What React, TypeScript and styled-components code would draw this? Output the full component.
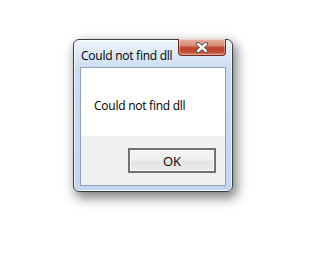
import React from "react";
import styled, { createGlobalStyle } from "styled-components";

const Global = createGlobalStyle`
  html, body { margin: 0; padding: 0; background: #ffffff; }
  body { font-family: "Open Sans", "Noto Sans", sans-serif; }
`;

const Page = styled.div`
  width: 333px;
  height: 280px;
  padding: 39px 0 0 73px;
  box-sizing: border-box;
`;

const Window = styled.div`
  width: 160px;
  height: 153px;
  box-sizing: border-box;
  border: 1px solid #3c3f44;
  border-radius: 6px;
  background: linear-gradient(to bottom, #eef4fb 0px, #dce8f6 14px, #cadcf1 30px, #c2d7ef 100%);
  box-shadow: inset 0 0 0 1px rgba(255, 255, 255, 0.75), 3px 5px 12px 1px rgba(0, 0, 0, 0.5);
  display: flex;
  flex-direction: column;
`;

const TitleBar = styled.div`
  height: 27px;
  display: flex;
  justify-content: space-between;
  align-items: flex-start;
  padding: 0 6px 0 7px;
`;

const Title = styled.span`
  font-size: 12px;
  line-height: 12px;
  letter-spacing: -0.25px;
  color: #000000;
  padding-top: 10px;
  white-space: nowrap;
`;

const CloseButton = styled.div`
  width: 48px;
  height: 17px;
  margin-top: -1px;
  box-sizing: border-box;
  border: 1px solid #6b2a1e;
  border-top: none;
  border-radius: 0 0 4px 4px;
  background: linear-gradient(to bottom, #eab2a4 0%, #d98b78 40%, #c2432c 55%, #c34a32 80%, #d98065 100%);
  box-shadow: inset 0 0 0 1px rgba(255, 255, 255, 0.35);
  display: flex;
  align-items: center;
  justify-content: center;
`;

const Client = styled.div`
  flex: 1;
  margin: 0 6px 5px 6px;
  border: 1px solid #8ea2b9;
  display: flex;
  flex-direction: column;
`;

const Body = styled.div`
  background: #ffffff;
  height: 68px;
  padding: 25px 0 0 13px;
  box-sizing: border-box;
`;

const Message = styled.span`
  font-size: 12px;
  line-height: 16px;
  letter-spacing: -0.25px;
  color: #000000;
  white-space: nowrap;
`;

const Footer = styled.div`
  flex: 1;
  background: #f0f0f0;
  display: flex;
  justify-content: flex-end;
  align-items: flex-start;
  padding: 12px 9px 0 0;
`;

const Button = styled.button`
  width: 88px;
  height: 25px;
  box-sizing: border-box;
  border: 2px solid #707070;
  background: linear-gradient(to bottom, #f4f4f4 0%, #eeeeee 50%, #e3e3e3 51%, #e9e9e9 100%);
  box-shadow: inset 0 0 0 1px #fcfcfc;
  font-family: "Open Sans", "Noto Sans", sans-serif;
  font-size: 13px;
  color: #000000;
  padding: 0;
  display: flex;
  align-items: center;
  justify-content: center;
`;

export default function App() {
  return (
    <>
      <Global />
      <Page>
        <Window>
          <TitleBar>
            <Title>Could not find dll</Title>
            <CloseButton>
              <svg width="14" height="11" viewBox="0 0 14 11">
                <path d="M3 2 L11 9 M11 2 L3 9" stroke="#4a4a4a" strokeWidth="4.2" strokeLinecap="round" />
                <path d="M3 2 L11 9 M11 2 L3 9" stroke="#ffffff" strokeWidth="2.4" strokeLinecap="round" />
              </svg>
            </CloseButton>
          </TitleBar>
          <Client>
            <Body>
              <Message>Could not find dll</Message>
            </Body>
            <Footer>
              <Button>OK</Button>
            </Footer>
          </Client>
        </Window>
      </Page>
    </>
  );
}
